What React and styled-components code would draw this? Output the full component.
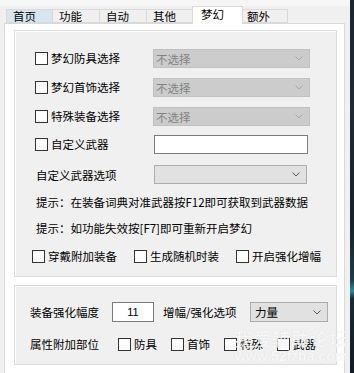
import React from "react";
import styled, { createGlobalStyle } from "styled-components";

const Global = createGlobalStyle`
  html, body { margin: 0; padding: 0; }
  body {
    background: #f0f0f0;
    font-family: "Noto Sans CJK SC", "Noto Sans", sans-serif;
    font-size: 11.5px;
    color: #000;
    overflow: hidden;
  }
  * { box-sizing: border-box; }
`;

const Root = styled.div`
  position: relative;
  display: flex;
  width: 354px;
  height: 373px;
  overflow: hidden;
  background: #f0f0f0;
`;

const Main = styled.div`
  width: 350px;
  display: flex;
  flex-direction: column;
  background: linear-gradient(#f6f6f6 0, #f6f6f6 6px, #f0f0f0 6px);
`;

const Strip = styled.div`
  width: 4px;
  background: linear-gradient(
    #1c2633 0%, #202a36 30%, #17212c 60%, #1f3b44 75%, #2a8a9a 78%, #1a2a35 80%, #121a24 100%
  );
`;

const TabStrip = styled.div`
  display: flex;
  align-items: flex-end;
  height: 23px;
  padding-left: 6px;
  position: relative;
  z-index: 2;
`;

const Tab = styled.div`
  width: ${(p) => (p.$active ? 51 : 47)}px;
  height: ${(p) => (p.$active ? 18 : 14)}px;
  margin: 0 ${(p) => (p.$active ? -2 : 0)}px;
  margin-bottom: ${(p) => (p.$active ? -1 : 0)}px;
  padding-left: ${(p) => (p.$active ? 8 : 6)}px;
  border: 1px solid #d9d9d9;
  border-bottom: ${(p) => (p.$active ? "none" : "1px solid #d9d9d9")};
  border-left-width: ${(p) => (p.$first || p.$active ? 1 : 0)}px;
  background: ${(p) => (p.$active ? "#ffffff" : p.$hover ? "#d8e6f2" : "#f0f0f0")};
  font-size: 11.5px;
  line-height: ${(p) => (p.$active ? 15 : 12)}px;
  position: relative;
  z-index: ${(p) => (p.$active ? 3 : 1)};
  white-space: nowrap;
`;

const Panel = styled.div`
  margin-left: 4px;
  width: 341px;
  flex: 1;
  background: #ffffff;
  border: 1px solid #d9d9d9;
  border-bottom: none;
  padding: 6px 0 0 9px;
  display: flex;
  flex-direction: column;
  gap: 8px;
`;

const Group = styled.div`
  width: 323px;
  height: ${(p) => p.$h}px;
  background: #f0f0f0;
  border: 1px solid #dcdcdc;
  box-shadow: inset 1px 1px 0 #ffffff;
  padding: ${(p) => p.$pad};
  display: flex;
  flex-direction: column;
`;

const Row = styled.div`
  display: flex;
  align-items: center;
  height: ${(p) => p.$h || 19}px;
  margin-top: ${(p) => p.$mt || 0}px;
  margin-left: ${(p) => p.$ml || 0}px;
  gap: ${(p) => p.$gap || 0}px;
  white-space: nowrap;
`;

const Cell = styled.div`
  width: ${(p) => p.$w}px;
  flex: none;
  display: flex;
  align-items: center;
  padding-left: ${(p) => p.$pl || 0}px;
`;

const Box = styled.span`
  width: 13px;
  height: 13px;
  border: 1px solid #333333;
  background: #ffffff;
  flex: none;
`;

const CheckWrap = styled.label`
  display: inline-flex;
  align-items: center;
  gap: 3px;
  line-height: 13px;
`;

const SelectBox = styled.div`
  width: ${(p) => p.$w}px;
  height: ${(p) => p.$h || 19}px;
  flex: none;
  display: flex;
  align-items: center;
  justify-content: space-between;
  padding: 0 6px 0 ${(p) => p.$pl || 2}px;
  background: ${(p) => (p.$disabled ? "#cccccc" : "#e1e1e1")};
  border: 1px solid ${(p) => (p.$disabled ? "#c0c0c0" : "#adadad")};
  color: ${(p) => (p.$disabled ? "#838383" : "#000")};
  font-size: ${(p) => p.$fs || 11.5}px;
`;

const TextBox = styled.div`
  width: ${(p) => p.$w}px;
  height: ${(p) => p.$h || 19}px;
  flex: none;
  background: #ffffff;
  border: 1px solid #7a7a7a;
  display: flex;
  align-items: center;
  justify-content: ${(p) => (p.$center ? "center" : "flex-start")};
  font-family: "Liberation Sans", sans-serif;
  font-size: 11px;
`;

const Tip = styled.div`
  height: 19px;
  line-height: 19px;
  margin-top: ${(p) => p.$mt}px;
  padding-left: 1px;
  white-space: nowrap;
`;

const Spacer = styled.div`
  width: ${(p) => p.$w}px;
  flex: none;
`;

const Watermark = styled.div`
  position: absolute;
  left: 234px;
  top: 327px;
  display: flex;
  flex-direction: column;
  align-items: center;
  color: rgba(255, 255, 255, 0.82);
  text-shadow: 0 0 1px rgba(0, 0, 0, 0.12);
  pointer-events: none;
  z-index: 5;
`;

const WmBig = styled.div`
  font-size: 18px;
  letter-spacing: 1px;
  line-height: 22px;
  font-weight: 500;
`;

const WmSmall = styled.div`
  font-family: "Liberation Sans", Arial, sans-serif;
  font-size: 14px;
  line-height: 14px;
  font-weight: bold;
`;

const Chevron = ({ color }) => (
  <svg width="8" height="5" viewBox="0 0 8 5">
    <path d="M0.5 0.5 L4 4 L7.5 0.5" fill="none" stroke={color} strokeWidth="1" />
  </svg>
);

const Check = ({ children }) => (
  <CheckWrap>
    <Box />
    <span>{children}</span>
  </CheckWrap>
);

const Select = ({ w, h, disabled, text, pl }) => (
  <SelectBox $w={w} $h={h} $disabled={disabled} $pl={pl}>
    <span>{text}</span>
    <Chevron color={disabled ? "#a8a8a8" : "#555"} />
  </SelectBox>
);

const tabs = ["首页", "功能", "自动", "其他", "梦幻", "额外"];

export default function App() {
  return (
    <Root>
      <Global />
      <Main>
        <TabStrip>
          {tabs.map((t, i) => (
            <Tab key={t} $first={i === 0} $hover={i === 0} $active={t === "梦幻"}>
              {t}
            </Tab>
          ))}
        </TabStrip>
        <Panel>
          <Group $h={247} $pad="18px 0 0 20px">
            <Row>
              <Cell $w={118}><Check>梦幻防具选择</Check></Cell>
              <Select w={157} disabled text="不选择" />
            </Row>
            <Row $mt={10}>
              <Cell $w={118}><Check>梦幻首饰选择</Check></Cell>
              <Select w={157} disabled text="不选择" />
            </Row>
            <Row $mt={10}>
              <Cell $w={118}><Check>特殊装备选择</Check></Cell>
              <Select w={157} disabled text="不选择" />
            </Row>
            <Row $mt={9}>
              <Cell $w={119}><Check>自定义武器</Check></Cell>
              <TextBox $w={154} />
            </Row>
            <Row $mt={11}>
              <Cell $w={119} $pl={1}>自定义武器选项</Cell>
              <Select w={153} text="" />
            </Row>
            <Tip $mt={9}>提示：在装备词典对准武器按F12即可获取到武器数据</Tip>
            <Tip $mt={7}>提示：如功能失效按[F7]即可重新开启梦幻</Tip>
            <Row $mt={9} $ml={-3} $gap={17}>
              <Check>穿戴附加装备</Check>
              <Check>生成随机时装</Check>
              <Check>开启强化增幅</Check>
            </Row>
          </Group>
          <Group $h={80} $pad="16px 0 0 15px">
            <Row $h={20}>
              <Cell $w={82}>装备强化幅度</Cell>
              <TextBox $w={42} $h={20} $center>11</TextBox>
              <Spacer $w={9} />
              <Cell $w={87}>增幅/强化选项</Cell>
              <Select w={78} h={20} text="力量" pl={4} />
            </Row>
            <Row $h={20} $mt={12}>
              <Cell $w={88}>属性附加部位</Cell>
              <Row $gap={14}>
                <Check>防具</Check>
                <Check>首饰</Check>
                <Check>特殊</Check>
                <Check>武器</Check>
              </Row>
            </Row>
          </Group>
        </Panel>
      </Main>
      <Strip />
      <Watermark>
        <WmBig>我爱辅助论坛</WmBig>
        <WmSmall>www.52fzba.com</WmSmall>
      </Watermark>
    </Root>
  );
}
